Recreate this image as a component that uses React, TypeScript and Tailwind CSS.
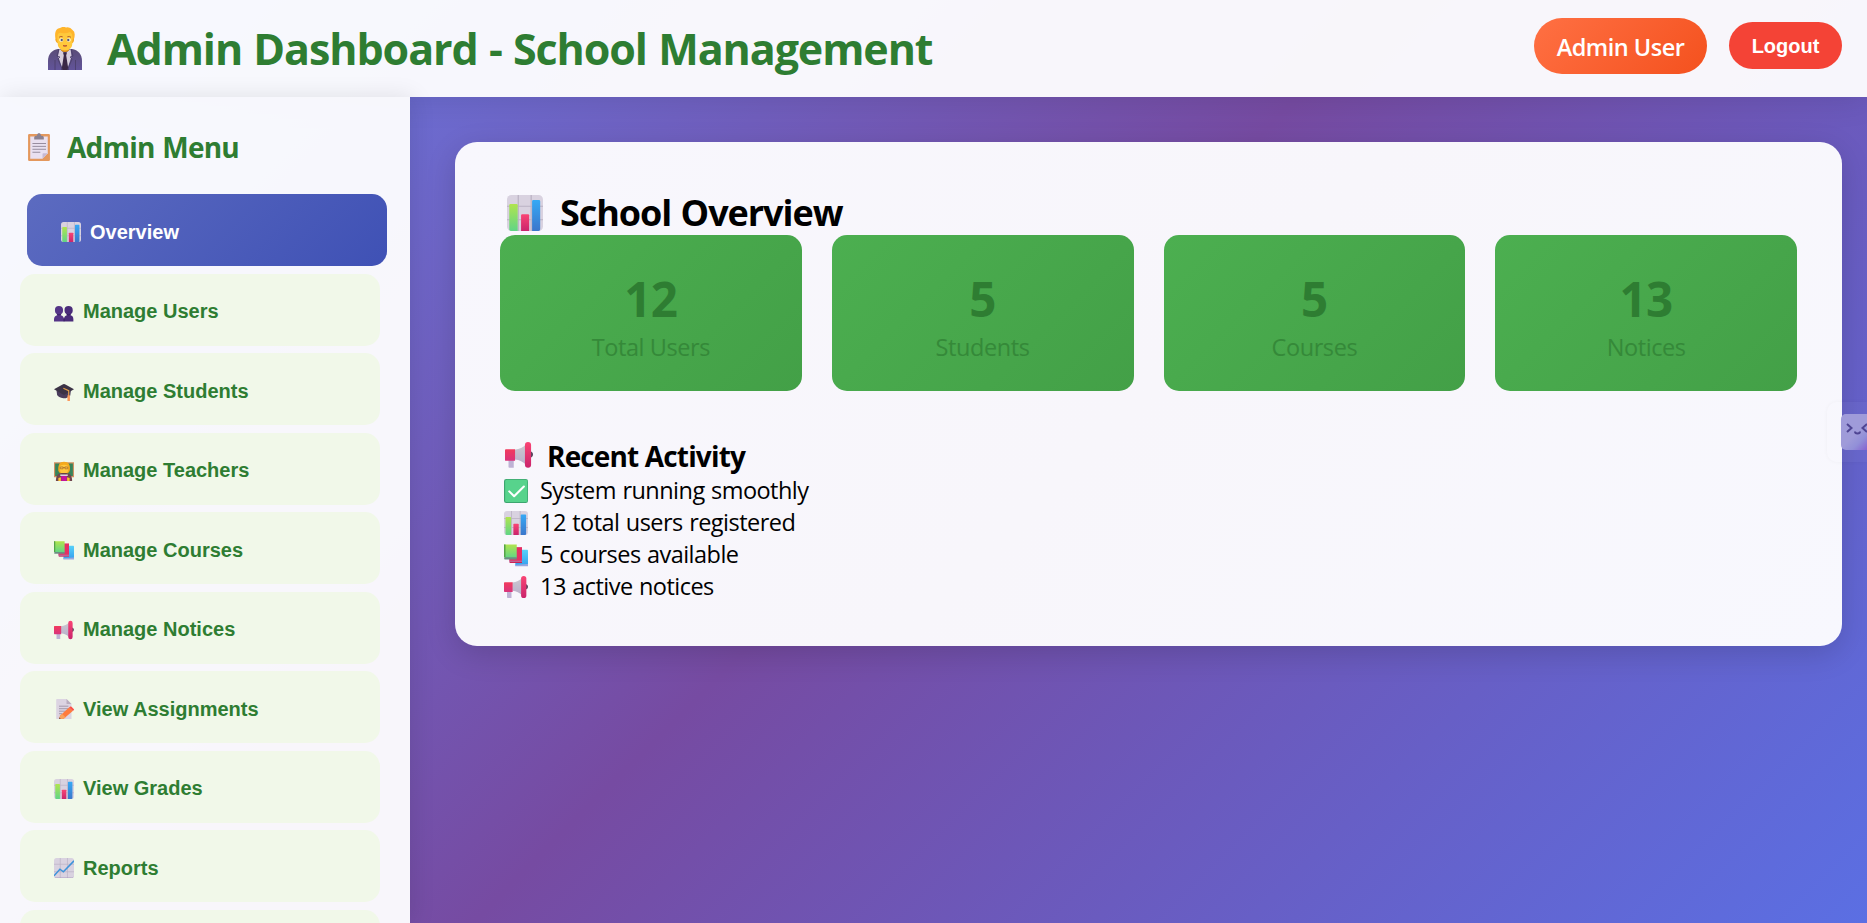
import type { ReactNode } from "react";

type IconName =
  | "chart"
  | "users"
  | "cap"
  | "teacher"
  | "books"
  | "megaphone"
  | "memo"
  | "trend"
  | "check"
  | "clipboard"
  | "admin";

const drawings: Record<IconName, ReactNode> = {
  chart: (
    <>
      <rect width="32" height="32" rx="4" fill="#d9d2e0" />
      <path d="M10 0V32M21.5 0V32M0 10H32M0 22H32" stroke="#bbb2c4" strokeWidth="1.1" />
      <path d="M2 9a1 1 0 0 1 1-1h5.500a1 1 0 0 1 1 1V32H3.500a1.500 1.500 0 0 1-1.500-1.500z" fill="url(#lime)" />
      <path d="M12.500 18a1 1 0 0 1 1-1h5.200a1 1 0 0 1 1 1v14h-7.200z" fill="url(#pink)" />
      <path d="M22.300 5.500a1 1 0 0 1 1-1h5.200a1 1 0 0 1 1 1v25a1.500 1.500 0 0 1-1.500 1.500h-5.700z" fill="url(#blue)" />
    </>
  ),
  users: (
    <>
      <path d="M0 31v-3.500c0-4 2.500-6 5-6.500v-1.500C2.500 18 1.500 16 1.500 13c0-4 2-6.500 6.300-6.500S14.500 9 14.500 13c0 3-1 5-3.500 6.500V21c2.500.5 5 2.500 5 6.500V31z" fill="#553587" />
      <path d="M16 31v-3.500c0-4 2-6 4.500-6.500v-1.500C18 18 16.800 16 16.800 13c0-4 2.200-6.500 6.500-6.500S30 9 30 13c0 3-1 5-3.500 6.500V21c3 .5 4.500 2.500 4.500 6.500V31z" fill="#4a2c79" />
      <path d="M4.500 19.500q3.500 2.500 7 0M20 19.500q3.500 2.500 7 0M16 26v5" stroke="#2f1858" strokeWidth="1.200" fill="none" />
    </>
  ),
  cap: (
    <>
      <path d="M4 15l11-3 12 3-1 8c-3 3-7 5-11 4.500-5-.5-9-3-10-5z" fill="#4a3d5c" />
      <path d="M0 13L14.500 5q1.500-.8 3 0L32 13 17.500 21.500q-1.500.8-3 0z" fill="#3c3346" />
      <path d="M15 11.500l8.500 4V25" fill="none" stroke="#e6a04a" strokeWidth="1.800" />
      <path d="M21.500 23h4v9h-4z" fill="#fb9a5c" />
    </>
  ),
  teacher: (
    <>
      <rect y="2" width="32" height="24" fill="#d29162" />
      <rect x="1.800" y="4" width="28.400" height="20" fill="#37845a" />
      <path d="M7 16c-1-10 2-15 9-15s11 5 9 15l-3 4H10z" fill="#f4a91d" />
      <path d="M9.500 8q7-4 13 0v6c0 4-3 6.500-6.500 6.500s-6.500-2.500-6.500-6.500z" fill="#ffc83d" />
      <path d="M10 9.500h4.500v3H10zM17.500 9.500H22v3h-4.500zM14.500 10.500h3" fill="none" stroke="#985b2b" />
      <path d="M3 32c0-8 3-12.500 8-12.500h10c5 0 8 4.500 8 12.500z" fill="#71464e" />
      <path d="M11.500 19.500h9l-2 4h-5z" fill="#5b3942" />
      <path d="M10 21.500h12V24H10z" fill="#ddd3e3" />
      <path d="M11.500 24h9v8h-9z" fill="#c4149b" />
      <path d="M7 27l4-1v6H7zM21 26l4 1v5h-4z" fill="#ffc22f" />
    </>
  ),
  books: (
    <>
      <path d="M16 9h15a1 1 0 0 1 1 1v20H15z" fill="url(#sky)" />
      <path d="M15 29l16-1h1v3H15z" fill="#98a7df" />
      <path d="M7 5.500h17v18.500H7z" fill="#e52f64" />
      <path d="M6.500 23.500H24v3H8z" fill="#b87baa" />
      <path d="M7 25h17v1.500H8z" fill="#c92356" />
      <path d="M0 2h17v18H1.500A1.500 1.500 0 0 1 0 18.500z" fill="url(#lime)" />
      <path d="M0 20.500L1.800 19H17v3H1.500A1.500 1.500 0 0 1 0 20.500z" fill="#6d8d83" />
      <path d="M0 2h2v17H0z" fill="#55a348" />
    </>
  ),
  megaphone: (
    <>
      <path d="M4 21h6v9.500H5a1 1 0 0 1-1-1z" fill="#bfb2d5" />
      <path d="M11 10c6-.7 9.500-2.500 13-6v23c-3.500-3.500-7-5.500-13-6z" fill="url(#silver)" />
      <path d="M0 10.500a1 1 0 0 1 1-1h10.500v13.200H1a1 1 0 0 1-1-1z" fill="url(#red)" />
      <path d="M28 11.500q4 1 4 4t-4 4z" fill="#55465d" />
      <rect x="22.800" y="1.200" width="7" height="29.500" rx="3.500" fill="url(#pink)" />
    </>
  ),
  memo: (
    <>
      <path d="M3.500 1A1 1 0 0 1 4.500 0H20l8 8v24H4.500a1 1 0 0 1-1-1z" fill="#dcd4e2" />
      <path d="M20 0l8 8h-7a1 1 0 0 1-1-1z" fill="#b9adbf" />
      <path d="M8 11.500h15M8 15.500h15M8 19.500h12M8 23.500h5" stroke="#9b91a2" strokeWidth="1.400" />
      <path d="M10 26.500L24 13.500l6 5.500L15.500 31.500 8 32z" fill="#ff7b3d" />
      <path d="M10 26.500l3-2.500 5.500 5-3 2.500L8 32z" fill="#f9a25d" />
      <path d="M24 13.500l2-1.500q1-.5 2 .5l3.500 3.500q1 1 0 2L30 19z" fill="#fb5147" />
      <path d="M8 32l.8-2.500 2 1.800z" fill="#50404a" />
    </>
  ),
  trend: (
    <>
      <rect width="32" height="32" rx="4" fill="#d9d2e0" />
      <path d="M10 0V32M21.500 0V32M0 10H32M0 22H32" stroke="#bbb2c4" strokeWidth="1.100" />
      <path d="M0 28.500L9.500 18l5.500 4L32 4.500" fill="none" stroke="#3c93da" strokeWidth="2.400" />
      <path d="M1 30.500q1 1.200 3 1.200h24q2 0 3-1.200" stroke="#a592bd" fill="none" />
    </>
  ),
  check: (
    <>
      <rect width="32" height="32" rx="3" fill="#3da56f" />
      <rect x="1.500" y="1" width="29.500" height="29.500" rx="2" fill="#57d38c" />
      <path d="M7 16.500l6.500 6.500L26.500 10" fill="none" stroke="#fff" strokeWidth="2.800" strokeLinecap="round" strokeLinejoin="round" />
    </>
  ),
  clipboard: (
    <>
      <rect y="1" width="25" height="31" rx="1.500" fill="#e4985d" />
      <path d="M2.500 4h20v19l-6 6.500h-14z" fill="#e9e0f0" />
      <path d="M22.500 23l-6 6.500V24a1 1 0 0 1 1-1z" fill="#c7b9d2" />
      <path d="M5 12h15.500M5 15.300h15.500M5 18.600h15.500M5 22h9" stroke="#8b8193" strokeWidth="1" />
      <path d="M7 5q0-2 2-2h1q.5-3 2.500-3T15 3h1q2 0 2 2v2.500H7z" fill="#8b8190" />
    </>
  ),
  admin: (
    <>
      <path d="M0 43V34c0-7 4-11 10-12h14c6 1 10 5 10 12v9z" fill="url(#suit)" />
      <path d="M11.500 21.500L17 27l5.500-5.500 1 8L19 43h-4l-5-14z" fill="#d8cedd" />
      <path d="M15 25.500h4l-.8 3L20.500 43h-7l2.300-14.500z" fill="#3b2847" />
      <path d="M11 22l-2 7 3 1-2 2 4.500 11M23 22l2 7-3 1 2 2-4.500 11M7 33v10M27.500 33v10" fill="none" stroke="#493d68" strokeWidth=".8" />
      <path d="M13 19h8v4.500q-4 3-8 0z" fill="#e89617" />
      <path d="M7.500 12C6 4 9 1.500 12 1q3-2 6-.5 4-1 6.500 2.500Q28 5 26 12l-1 4H9z" fill="#ffb52c" />
      <path d="M9.500 9Q10 5 14 6t8-1q2.500 1.500 2.500 5v5q0 8.500-7.500 8.500T9.500 15z" fill="#ffc93c" />
      <path d="M8.500 11.500q-1.500 0-1 2t2 2M25 11.500q1.500 0 1 2t-2 2" fill="#f4a929" />
      <ellipse cx="13.300" cy="13" rx="2" ry="1.700" fill="#fff" />
      <ellipse cx="20.700" cy="13" rx="2" ry="1.700" fill="#fff" />
      <circle cx="13.700" cy="13" r="1.200" fill="#5c5968" />
      <circle cx="20.300" cy="13" r="1.200" fill="#5c5968" />
      <path d="M11 10.300q2-1.600 3.700-.5M19.300 9.800q2-1 3.700.5" fill="none" stroke="#b8642f" />
      <path d="M15 18q2 .8 4 0l-.5 1.500h-3z" fill="#a4302e" />
    </>
  ),
};

function Icon({ name, className, box = "0 0 32 32" }: { name: IconName; className: string; box?: string }) {
  return (
    <svg viewBox={box} className={`shrink-0 ${className}`} aria-hidden="true">
      {drawings[name]}
    </svg>
  );
}

function Gradients() {
  const list: [string, string, string][] = [
    ["lime", "#b0e44f", "#60d586"],
    ["pink", "#fa4474", "#ca246c"],
    ["blue", "#36a9f5", "#3b76cb"],
    ["sky", "#57d2f9", "#36a0ee"],
    ["red", "#f23b5d", "#d9337c"],
    ["silver", "#cbc8cf", "#b9afcb"],
    ["suit", "#5a4d77", "#62549a"],
  ];
  return (
    <svg className="absolute size-0" aria-hidden="true">
      <defs>
        {list.map(([id, from, to]) => (
          <linearGradient key={id} id={id} x1="0" y1="0" x2="0" y2="1">
            <stop stopColor={from} />
            <stop offset="1" stopColor={to} />
          </linearGradient>
        ))}
      </defs>
    </svg>
  );
}

const menu: { icon: IconName; label: string }[] = [
  { icon: "chart", label: "Overview" },
  { icon: "users", label: "Manage Users" },
  { icon: "cap", label: "Manage Students" },
  { icon: "teacher", label: "Manage Teachers" },
  { icon: "books", label: "Manage Courses" },
  { icon: "megaphone", label: "Manage Notices" },
  { icon: "memo", label: "View Assignments" },
  { icon: "chart", label: "View Grades" },
  { icon: "trend", label: "Reports" },
];

const stats = [
  { value: 12, label: "Total Users" },
  { value: 5, label: "Students" },
  { value: 5, label: "Courses" },
  { value: 13, label: "Notices" },
];

const activity: { icon: IconName; text: string }[] = [
  { icon: "check", text: "System running smoothly" },
  { icon: "chart", text: "12 total users registered" },
  { icon: "books", text: "5 courses available" },
  { icon: "megaphone", text: "13 active notices" },
];

export default function App() {
  return (
    <div className="relative flex h-[923px] w-full flex-col overflow-hidden bg-[linear-gradient(135deg,#667eea_0%,#764ba2_50%,#5b6fe3_100%)] font-['Open_Sans','Noto_Sans',sans-serif] text-black">
      <Gradients />
      <header className="flex h-[97px] shrink-0 items-center bg-white/95 pr-[25px] pl-12 shadow-[0_3px_30px_rgba(0,0,0,0.1)]">
        <Icon name="admin" box="0 0 34 43" className="h-[43px] w-[34px]" />
        <h1 className="ml-[25px] text-[43px] leading-[58px] font-bold tracking-[-1.08px] [word-spacing:1.2px] whitespace-nowrap text-[#2e7d32]">
          Admin Dashboard - School Management
        </h1>
        <div className="mb-[5px] ml-auto flex items-center gap-[22px]">
          <span className="flex h-14 w-[173px] items-center justify-center rounded-[28px] bg-[linear-gradient(135deg,#ff7043,#f4511e)] pt-1 text-[23.5px] font-semibold tracking-[-0.5px] whitespace-nowrap text-white">
            Admin User
          </span>
          <button className="mb-px flex h-[47px] w-[113px] items-center justify-center rounded-[24px] bg-[#f44336] font-['Liberation_Sans',sans-serif] text-[20px] font-bold text-white">
            Logout
          </button>
        </div>
      </header>

      <div className="flex min-h-0 flex-1">
        <aside className="w-[410px] shrink-0 bg-white/95 px-5 pt-[30px] shadow-[3px_0_22px_rgba(0,0,0,0.1)]">
          <h2 className="flex h-[38px] items-center pl-2 text-[28px] font-bold tracking-[-0.75px] [word-spacing:1px] text-[#2e7d32]">
            <Icon name="clipboard" box="0 0 25 32" className="mt-0.5 mr-[17px] h-7 w-[22px]" />
            <span className="pt-0.5">Admin Menu</span>
          </h2>
          <nav className="mt-[29px] flex flex-col gap-[7.5px]">
            {menu.map(({ icon, label }, i) => (
              <button
                key={label}
                className={`flex h-[72px] w-[360px] shrink-0 items-center gap-[9px] rounded-[15px] pt-[3px] pl-[34px] font-['Liberation_Sans',sans-serif] text-[20px] font-bold ${
                  i === 0
                    ? "ml-[7px] bg-[linear-gradient(135deg,#5c6bc0,#3f51b5)] text-white"
                    : "bg-[#f1f8e9] text-[#2e7d32]"
                }`}
              >
                <Icon name={icon} className="mt-px size-5" />
                {label}
              </button>
            ))}
            <div className="h-[72px] w-[360px] shrink-0 rounded-[15px] bg-[#f1f8e9]" />
          </nav>
        </aside>

        <main className="flex-1 pt-[45px] pr-[25px] pl-[45px]">
          <section className="h-[504px] rounded-[22px] bg-[linear-gradient(135deg,#f8f7fd,#f8f6fb_50%,#f8f8fe)] p-[45px] shadow-[0_8px_30px_rgba(0,0,0,0.15)]">
            <h2 className="flex h-12 items-center pl-[7px] text-[36px] font-bold tracking-[-1.05px] [word-spacing:1px]">
              <Icon name="chart" className="mt-1 mr-[17px] size-9" />
              <span className="pt-1">School Overview</span>
            </h2>
            <div className="grid grid-cols-4 gap-[30px]">
              {stats.map(({ value, label }) => (
                <div
                  key={label}
                  className="h-[156px] rounded-[15px] bg-[linear-gradient(135deg,#4caf50,#43a047)] pt-8 text-center text-[#2e7d32]"
                >
                  <div className="text-[47.5px] leading-[64px] font-bold tracking-[-0.5px]">{value}</div>
                  <div className="text-[23.5px] leading-8 font-medium tracking-[-0.4px] opacity-70">{label}</div>
                </div>
              ))}
            </div>
            <h3 className="mt-[45px] flex h-[37px] items-center pl-[5px] text-[28px] font-bold tracking-[-0.85px]">
              <Icon name="megaphone" className="mt-px mr-3.5 size-7" />
              <span className="pt-0.5">Recent Activity</span>
            </h3>
            <ul>
              {activity.map(({ icon, text }) => (
                <li
                  key={text}
                  className="flex h-8 items-center gap-3 pl-1 text-[23.5px] tracking-[-0.53px] [word-spacing:0.8px]"
                >
                  <Icon name={icon} className="mt-1 size-6" />
                  <span className="pt-1">{text}</span>
                </li>
              ))}
            </ul>
          </section>
        </main>
      </div>

      <div className="absolute top-[402px] right-0 flex h-[60px] w-10 items-center justify-end rounded-l-[10px] bg-white/3 shadow-[0_0_4px_rgba(0,0,0,0.04)]">
        <div className="flex h-9 w-[26px] rounded-l-[5px] bg-[linear-gradient(135deg,#9f9bd9_55%,#9290d8_75%,#8562d0)]">
          <svg viewBox="0 0 26 36" className="h-9 w-[26px]" aria-hidden="true">
            <path d="M6 10l4.500 4L6 18M26 10l-4.500 4 4.500 4M14 17.500q0 2 2.500 2t2.500-2" fill="none" stroke="#4f4593" strokeWidth="2" />
          </svg>
        </div>
      </div>
    </div>
  );
}
